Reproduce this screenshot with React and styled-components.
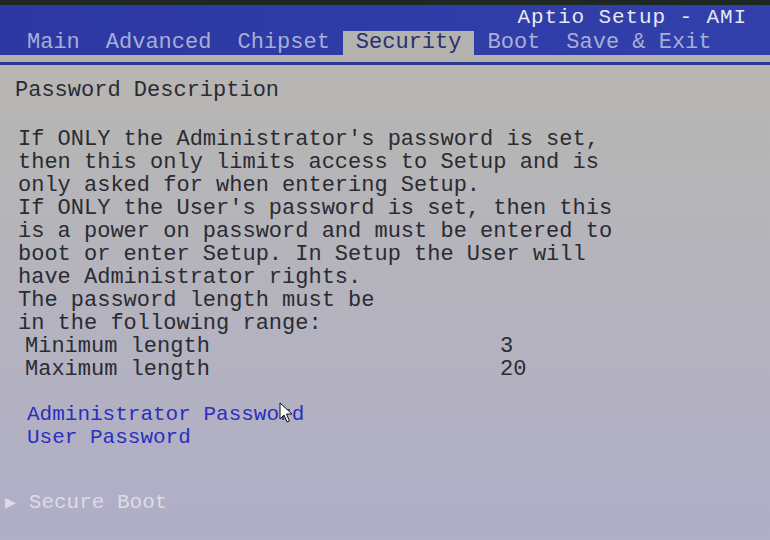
import React from 'react'
import styled, { createGlobalStyle } from 'styled-components'

const colors = {
  band: '#1d2824',
  blue: '#2f3ba6',
  line: '#2c3894',
  grey: '#b3b2ae',
  text: '#2a2b33',
  link: '#2b2fbf',
  dim: '#dcdce6',
}

const GlobalStyle = createGlobalStyle`
  html, body {
    margin: 0;
    padding: 0;
    background: ${ colors.grey };
  }
  body {
    font-family: "Liberation Mono", "DejaVu Sans Mono", monospace;
  }
`

const tabs = ['Main', 'Advanced', 'Chipset', 'Security', 'Boot', 'Save & Exit']

const description = [
  "If ONLY the Administrator's password is set,",
  'then this only limits access to Setup and is',
  'only asked for when entering Setup.',
  "If ONLY the User's password is set, then this",
  'is a power on password and must be entered to',
  'boot or enter Setup. In Setup the User will',
  'have Administrator rights.',
  'The password length must be',
  'in the following range:',
]

const ranges = [
  { label: 'Minimum length', value: '3' },
  { label: 'Maximum length', value: '20' },
]

const App = () => {
  return (
    <Screen>
      <GlobalStyle />
      <Header>
        <TitleRow>Aptio Setup - AMI</TitleRow>
        <TabRow>
          {tabs.map(tab => (
            <Tab key={tab} active={tab === 'Security'}>{tab}</Tab>
          ))}
        </TabRow>
      </Header>
      <Divider />
      <Body>
        <Heading>Password Description</Heading>
        <Paragraph>
          {description.map(line => (
            <Line key={line}>{line}</Line>
          ))}
        </Paragraph>
        <Ranges>
          {ranges.map(r => (
            <React.Fragment key={r.label}>
              <span>{r.label}</span>
              <span>{r.value}</span>
            </React.Fragment>
          ))}
        </Ranges>
        <Links>
          <Line>Administrator Password</Line>
          <Line>User Password</Line>
        </Links>
        <SubMenu>
          <Arrow>&#9654;</Arrow>
          <span>Secure Boot</span>
        </SubMenu>
        <Cursor width="14" height="22" viewBox="0 0 14 22">
          <path
            d="M1 1 L1 17 L5 13 L8 20 L10.5 19 L7.5 12 L13 12 Z"
            fill="#fafafa"
            stroke="#111"
            strokeWidth="1"
            strokeLinejoin="round"
          />
        </Cursor>
      </Body>
    </Screen>
  )
}

const Screen = styled.div`
  width: 770px;
  height: 540px;
  overflow: hidden;
  display: flex;
  flex-direction: column;
  font-size: 22px;
  border-top: 5px solid ${ colors.band };
  box-sizing: border-box;
`

const Header = styled.div`
  background: linear-gradient(90deg, #2d38a2 0%, #3240ab 100%);
  padding-left: 14px;
`

const TitleRow = styled.div`
  height: 26px;
  padding-right: 23px;
  line-height: 26px;
  font-size: 21px;
  letter-spacing: 0.9px;
  display: flex;
  justify-content: flex-end;
  color: #e6e8f2;
`

const TabRow = styled.div`
  display: flex;
  height: 24px;
  line-height: 24px;
`

const Tab = styled.div`
  padding: 0 13px;
  white-space: pre;
  color: ${ p => (p.active ? '#2b2f70' : '#a7aed6') };
  background: ${ p => (p.active ? colors.grey : 'transparent') };
`

const Divider = styled.div`
  height: 7px;
  background: ${ colors.grey };
  border-bottom: 3px solid ${ colors.line };
`

const Body = styled.div`
  flex: 1;
  position: relative;
  padding: 14px 0 0 15px;
  line-height: 23px;
  color: ${ colors.text };
  background: linear-gradient(180deg, #b7b6b2 0%, #b5b4bb 40%, #b0aec8 100%);
`

const Heading = styled.div`
  white-space: pre;
`

const Paragraph = styled.div`
  margin-top: 26px;
  padding-left: 3px;
`

const Line = styled.div`
  white-space: pre;
`

const Ranges = styled.div`
  display: grid;
  grid-template-columns: 475px auto;
  padding-left: 10px;
  white-space: pre;
`

const Links = styled.div`
  margin-top: 22px;
  padding-left: 12px;
  font-size: 21px;
  color: ${ colors.link };
`

const SubMenu = styled.div`
  margin-top: 42px;
  margin-left: -10px;
  display: flex;
  align-items: center;
  gap: 13px;
  font-size: 21px;
  color: ${ colors.dim };
  white-space: pre;
`

const Arrow = styled.span`
  font-family: "DejaVu Sans", sans-serif;
  font-size: 14px;
`

const Cursor = styled.svg`
  position: absolute;
  left: 279px;
  top: 337px;
`

export default App
